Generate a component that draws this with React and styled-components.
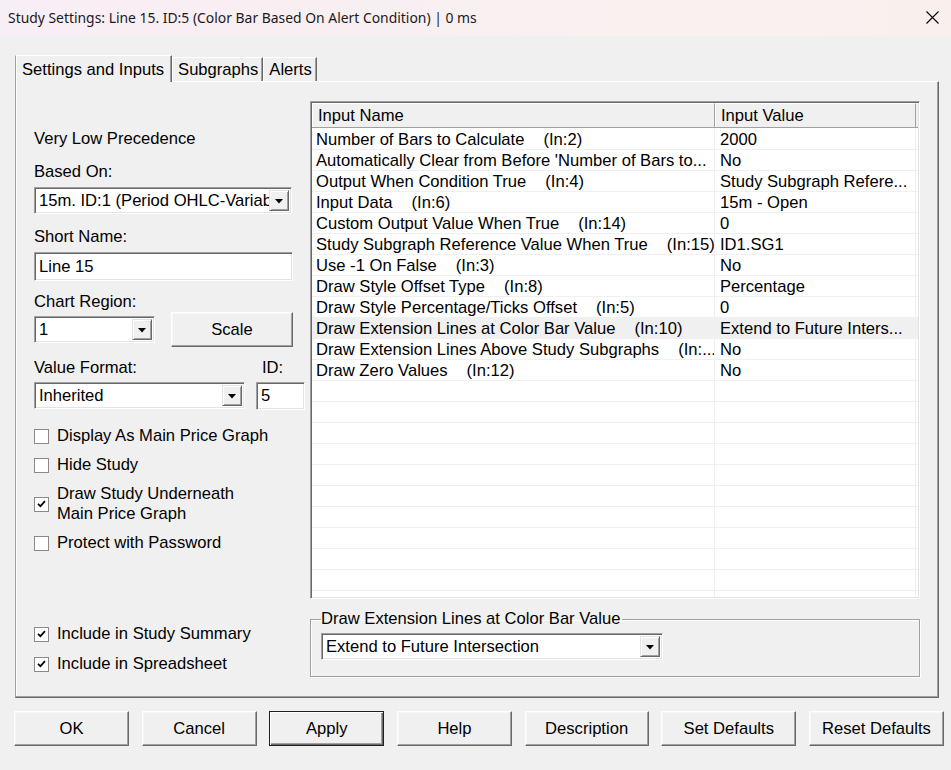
import styled, { createGlobalStyle } from "styled-components";

const GlobalStyle = createGlobalStyle`
  html, body {
    margin: 0;
    padding: 0;
    background: #f0f0f0;
  }
  body {
    font-family: "Liberation Sans", Arial, sans-serif;
    font-size: 16.6px;
    color: #000;
  }
  * {
    box-sizing: border-box;
  }
`;

const inputs = [
  { name: "Number of Bars to Calculate", tag: "(In:2)", value: "2000" },
  { name: "Automatically Clear from Before 'Number of Bars to...", value: "No" },
  { name: "Output When Condition True", tag: "(In:4)", value: "Study Subgraph Refere..." },
  { name: "Input Data", tag: "(In:6)", value: "15m - Open" },
  { name: "Custom Output Value When True", tag: "(In:14)", value: "0" },
  { name: "Study Subgraph Reference Value When True", tag: "(In:15)", value: "ID1.SG1" },
  { name: "Use -1 On False", tag: "(In:3)", value: "No" },
  { name: "Draw Style Offset Type", tag: "(In:8)", value: "Percentage" },
  { name: "Draw Style Percentage/Ticks Offset", tag: "(In:5)", value: "0" },
  {
    name: "Draw Extension Lines at Color Bar Value",
    tag: "(In:10)",
    value: "Extend to Future Inters...",
    selected: true,
  },
  { name: "Draw Extension Lines Above Study Subgraphs", tag: "(In:...", value: "No" },
  { name: "Draw Zero Values", tag: "(In:12)", value: "No" },
];

const EMPTY_ROWS = 11;

const buttons = [
  { label: "OK", width: 115 },
  { label: "Cancel", width: 115 },
  { label: "Apply", width: 115, primary: true },
  { label: "Help", width: 115 },
  { label: "Description", width: 124 },
  { label: "Set Defaults", width: 135 },
  { label: "Reset Defaults", width: 135 },
];

const Arrow = () => (
  <svg width="8" height="5" viewBox="0 0 8 5">
    <polygon points="0,0 8,0 4,4.5" fill="#000" />
  </svg>
);

const Combo = ({ value, width }) => (
  <ComboBox $width={width}>
    <ComboText>{value}</ComboText>
    <DropButton>
      <Arrow />
    </DropButton>
  </ComboBox>
);

const Check = ({ checked, children }) => (
  <CheckRow>
    <CheckBox>
      {checked && (
        <svg width="9" height="8" viewBox="0 0 9 8">
          <polyline
            points="1,3.8 3.4,6.2 8,1.2"
            fill="none"
            stroke="#000"
            strokeWidth="1.7"
          />
        </svg>
      )}
    </CheckBox>
    <CheckLabel>{children}</CheckLabel>
  </CheckRow>
);

const App = () => {
  return (
    <>
      <GlobalStyle />
      <Window>
        <TitleBar>
          <Title>
            Study Settings: Line 15. ID:5 (Color Bar Based On Alert Condition) | 0 ms
          </Title>
          <CloseButton>
            <svg width="13" height="13" viewBox="0 0 13 13">
              <path d="M0.5 0.5 L12.5 12.5 M12.5 0.5 L0.5 12.5" stroke="#000" strokeWidth="1.1" />
            </svg>
          </CloseButton>
        </TitleBar>

        <TabStrip>
          <Tab $active>Settings and Inputs</Tab>
          <Tab>Subgraphs</Tab>
          <Tab>Alerts</Tab>
        </TabStrip>

        <Panel>
          <LeftColumn>
            <Label>Very Low Precedence</Label>
            <Label $gap={13}>Based On:</Label>
            <FieldSlot>
              <Combo value="15m. ID:1 (Period OHLC-Variable)" width={258} />
            </FieldSlot>
            <Label $gap={13}>Short Name:</Label>
            <FieldSlot>
              <TextField $width={259} $height={29}>Line 15</TextField>
            </FieldSlot>
            <Label $gap={11}>Chart Region:</Label>
            <RegionRow>
              <Combo value="1" width={121} />
              <PushButton $width={122}>Scale</PushButton>
            </RegionRow>
            <FormatGrid>
              <span>Value Format:</span>
              <IdLabel>ID:</IdLabel>
              <Combo value="Inherited" width={211} />
              <TextField $width={49} $height={28}>5</TextField>
            </FormatGrid>

            <CheckList>
              <Check>Display As Main Price Graph</Check>
              <Check>Hide Study</Check>
              <Check checked>
                Draw Study Underneath
                <br />
                Main Price Graph
              </Check>
              <Check>Protect with Password</Check>
            </CheckList>

            <BottomChecks>
              <Check checked>Include in Study Summary</Check>
              <Check checked>Include in Spreadsheet</Check>
            </BottomChecks>
          </LeftColumn>

          <RightColumn>
            <GridFrame>
              <HeaderRow>
                <HeaderCell $width={403}>Input Name</HeaderCell>
                <HeaderCell $width={201}>Input Value</HeaderCell>
                <HeaderFill />
              </HeaderRow>
              <GridBody>
                {inputs.map((row) => (
                  <GridRow key={row.name} $selected={row.selected}>
                    <NameCell>
                      {row.name}
                      {row.tag && <InTag>{row.tag}</InTag>}
                    </NameCell>
                    <ValueCell>{row.value}</ValueCell>
                    <FillCell />
                  </GridRow>
                ))}
                {Array.from({ length: EMPTY_ROWS }).map((_, i) => (
                  <GridRow key={`empty-${i}`}>
                    <NameCell />
                    <ValueCell />
                    <FillCell />
                  </GridRow>
                ))}
              </GridBody>
            </GridFrame>

            <GroupBox>
              <GroupLegend>Draw Extension Lines at Color Bar Value</GroupLegend>
              <Combo value="Extend to Future Intersection" width={342} />
            </GroupBox>
          </RightColumn>
        </Panel>

        <ButtonRow>
          {buttons.map((b) => (
            <PushButton key={b.label} $width={b.width} $primary={b.primary}>
              {b.label}
            </PushButton>
          ))}
        </ButtonRow>
      </Window>
    </>
  );
};

export default App;

const Window = styled.div`
  width: 951px;
  height: 770px;
  background: #f0f0f0;
  overflow: hidden;
`;

const TitleBar = styled.div`
  height: 36px;
  display: flex;
  align-items: center;
  justify-content: space-between;
  padding: 0 12px 0 8px;
  background: linear-gradient(90deg, #f8eef5 0%, #f9f0f1 60%, #f9f0ee 100%);
`;

const Title = styled.div`
  font-family: "Noto Sans", "Open Sans", sans-serif;
  font-size: 13.9px;
  color: #1a1a1a;
  white-space: nowrap;
  padding-bottom: 1px;
`;

const CloseButton = styled.div`
  width: 13px;
  height: 13px;
  display: flex;
  margin-top: -1px;
`;

const TabStrip = styled.div`
  display: flex;
  align-items: flex-end;
  height: 26px;
  margin: 19px 0 0 15px;
`;

const Tab = styled.div`
  position: relative;
  z-index: ${(p) => (p.$active ? 1 : 0)};
  height: ${(p) => (p.$active ? "27px" : "24px")};
  margin-bottom: ${(p) => (p.$active ? "-1px" : "0")};
  padding: ${(p) => (p.$active ? "2px 7px 0 6px" : "1px 4px 0 5px")};
  display: flex;
  align-items: center;
  white-space: nowrap;
  background: #f0f0f0;
  border-top: 1px solid #ffffff;
  border-left: 1px solid ${(p) => (p.$active ? "#a0a0a0" : "#ffffff")};
  border-right: 1px solid #696969;
  box-shadow: inset -1px 0 0 #a0a0a0, inset ${(p) => (p.$active ? "1px" : "0")} 0 0 #ffffff;
`;

const Panel = styled.div`
  width: 924px;
  height: 617px;
  margin-left: 15px;
  display: flex;
  padding: 19px 17px 18px 18px;
  border-top: 1px solid #ffffff;
  border-left: 1px solid #a0a0a0;
  border-right: 1px solid #696969;
  border-bottom: 1px solid #696969;
  box-shadow: inset -1px -1px 0 #a0a0a0, inset 1px 0 0 #ffffff;
`;

const LeftColumn = styled.div`
  width: 272px;
  margin-right: 4px;
  display: flex;
  flex-direction: column;
  padding: 28px 0 5px 0;
`;

const RightColumn = styled.div`
  width: 610px;
  display: flex;
  flex-direction: column;
`;

const Label = styled.div`
  line-height: 20px;
  height: 20px;
  margin-top: ${(p) => p.$gap || 0}px;
  white-space: nowrap;
`;

const FieldSlot = styled.div`
  margin-top: 5px;
  display: flex;
`;

const sunken = `
  background: #ffffff;
  border-style: solid;
  border-width: 1px;
  border-color: #a0a0a0 #ffffff #ffffff #a0a0a0;
  box-shadow: inset 1px 1px 0 #696969, inset -1px -1px 0 #e3e3e3;
`;

const ComboBox = styled.div`
  ${sunken}
  width: ${(p) => p.$width}px;
  height: 27px;
  display: flex;
  align-items: center;
  padding: 2px 2px 2px 4px;
  overflow: hidden;
`;

const ComboText = styled.div`
  flex: 1;
  min-width: 0;
  overflow: hidden;
  white-space: nowrap;
  line-height: 20px;
`;

const DropButton = styled.div`
  width: 20px;
  height: 21px;
  flex: none;
  display: flex;
  align-items: center;
  justify-content: center;
  background: #f0f0f0;
  border-style: solid;
  border-width: 1px;
  border-color: #e3e3e3 #696969 #696969 #e3e3e3;
  box-shadow: inset 1px 1px 0 #ffffff, inset -1px -1px 0 #a0a0a0;
  padding-top: 1px;
`;

const TextField = styled.div`
  ${sunken}
  width: ${(p) => p.$width}px;
  height: ${(p) => p.$height}px;
  display: flex;
  align-items: center;
  padding: 0 4px;
  white-space: nowrap;
`;

const RegionRow = styled.div`
  display: flex;
  align-items: center;
  gap: 16px;
  height: 35px;
`;

const PushButton = styled.div`
  width: ${(p) => p.$width}px;
  height: 35px;
  display: flex;
  align-items: center;
  justify-content: center;
  white-space: nowrap;
  background: #f0f0f0;
  border: 1px solid ${(p) => (p.$primary ? "#1f1f1f" : "#ffffff")};
  border-right-color: ${(p) => (p.$primary ? "#1f1f1f" : "#696969")};
  border-bottom-color: ${(p) => (p.$primary ? "#1f1f1f" : "#696969")};
  box-shadow: ${(p) =>
    p.$primary
      ? "inset 1px 1px 0 #ffffff, inset -1px -1px 0 #696969, inset -2px -2px 0 #a0a0a0"
      : "inset -1px -1px 0 #a0a0a0, inset 1px 1px 0 #f7f7f7"};
`;

const FormatGrid = styled.div`
  display: grid;
  grid-template-columns: 211px 49px;
  grid-template-rows: 20px 28px;
  column-gap: 11px;
  row-gap: 4px;
  margin-top: 11px;
  align-items: start;
  line-height: 20px;
  white-space: nowrap;
`;

const IdLabel = styled.span`
  padding-left: 6px;
`;

const CheckList = styled.div`
  display: flex;
  flex-direction: column;
  gap: 9px;
  margin-top: 16px;
`;

const BottomChecks = styled.div`
  display: flex;
  flex-direction: column;
  gap: 10px;
  margin-top: auto;
`;

const CheckRow = styled.div`
  display: flex;
  align-items: center;
  gap: 8px;
`;

const CheckBox = styled.div`
  width: 15px;
  height: 15px;
  flex: none;
  background: #ffffff;
  border: 1px solid #8a8a8a;
  display: flex;
  align-items: center;
  justify-content: center;
`;

const CheckLabel = styled.div`
  line-height: 20px;
  white-space: nowrap;
`;

const GridFrame = styled.div`
  width: 610px;
  height: 498px;
  display: flex;
  flex-direction: column;
  overflow: hidden;
  background: #ffffff;
  border-style: solid;
  border-width: 1px;
  border-color: #a0a0a0 #ffffff #ffffff #a0a0a0;
  box-shadow: inset 1px 1px 0 #696969, inset -1px -1px 0 #e3e3e3;
  padding: 1px;
`;

const HeaderRow = styled.div`
  display: flex;
  height: 25px;
  flex: none;
  background: #f0f0f0;
  border-bottom: 1px solid #a0a0a0;
`;

const HeaderCell = styled.div`
  width: ${(p) => p.$width}px;
  display: flex;
  align-items: center;
  padding-left: 5px;
  white-space: nowrap;
  border-top: 1px solid #ffffff;
  border-left: 1px solid #ffffff;
  border-right: 1px solid #a0a0a0;
`;

const HeaderFill = styled.div`
  flex: 1;
  border-top: 1px solid #ffffff;
`;

const GridBody = styled.div`
  flex: 1;
  overflow: hidden;
  padding-top: 1px;
`;

const GridRow = styled.div`
  display: flex;
  height: 21px;
  background: ${(p) => (p.$selected ? "#f0f0f0" : "#ffffff")};
  border-bottom: 1px solid #f0f0f0;
`;

const NameCell = styled.div`
  width: 403px;
  padding: 1px 0 0 4px;
  line-height: 20px;
  white-space: nowrap;
  overflow: hidden;
  border-right: 1px solid #f0f0f0;
`;

const InTag = styled.span`
  margin-left: 19px;
`;

const ValueCell = styled.div`
  width: 201px;
  padding: 1px 0 0 5px;
  line-height: 20px;
  white-space: nowrap;
  overflow: hidden;
  border-right: 1px solid #f0f0f0;
`;

const FillCell = styled.div`
  flex: 1;
`;

const GroupBox = styled.fieldset`
  margin: 10px 0 0 0;
  padding: 4px 10px 16px 10px;
  min-width: 0;
  border: 1px solid #a0a0a0;
  box-shadow: inset 1px 1px 0 #ffffff, 1px 1px 0 #ffffff;
`;

const GroupLegend = styled.legend`
  padding: 0 2px 0 0;
  line-height: 20px;
  white-space: nowrap;
`;

const ButtonRow = styled.div`
  display: flex;
  justify-content: space-between;
  margin: 13px 7px 0 14px;
`;
